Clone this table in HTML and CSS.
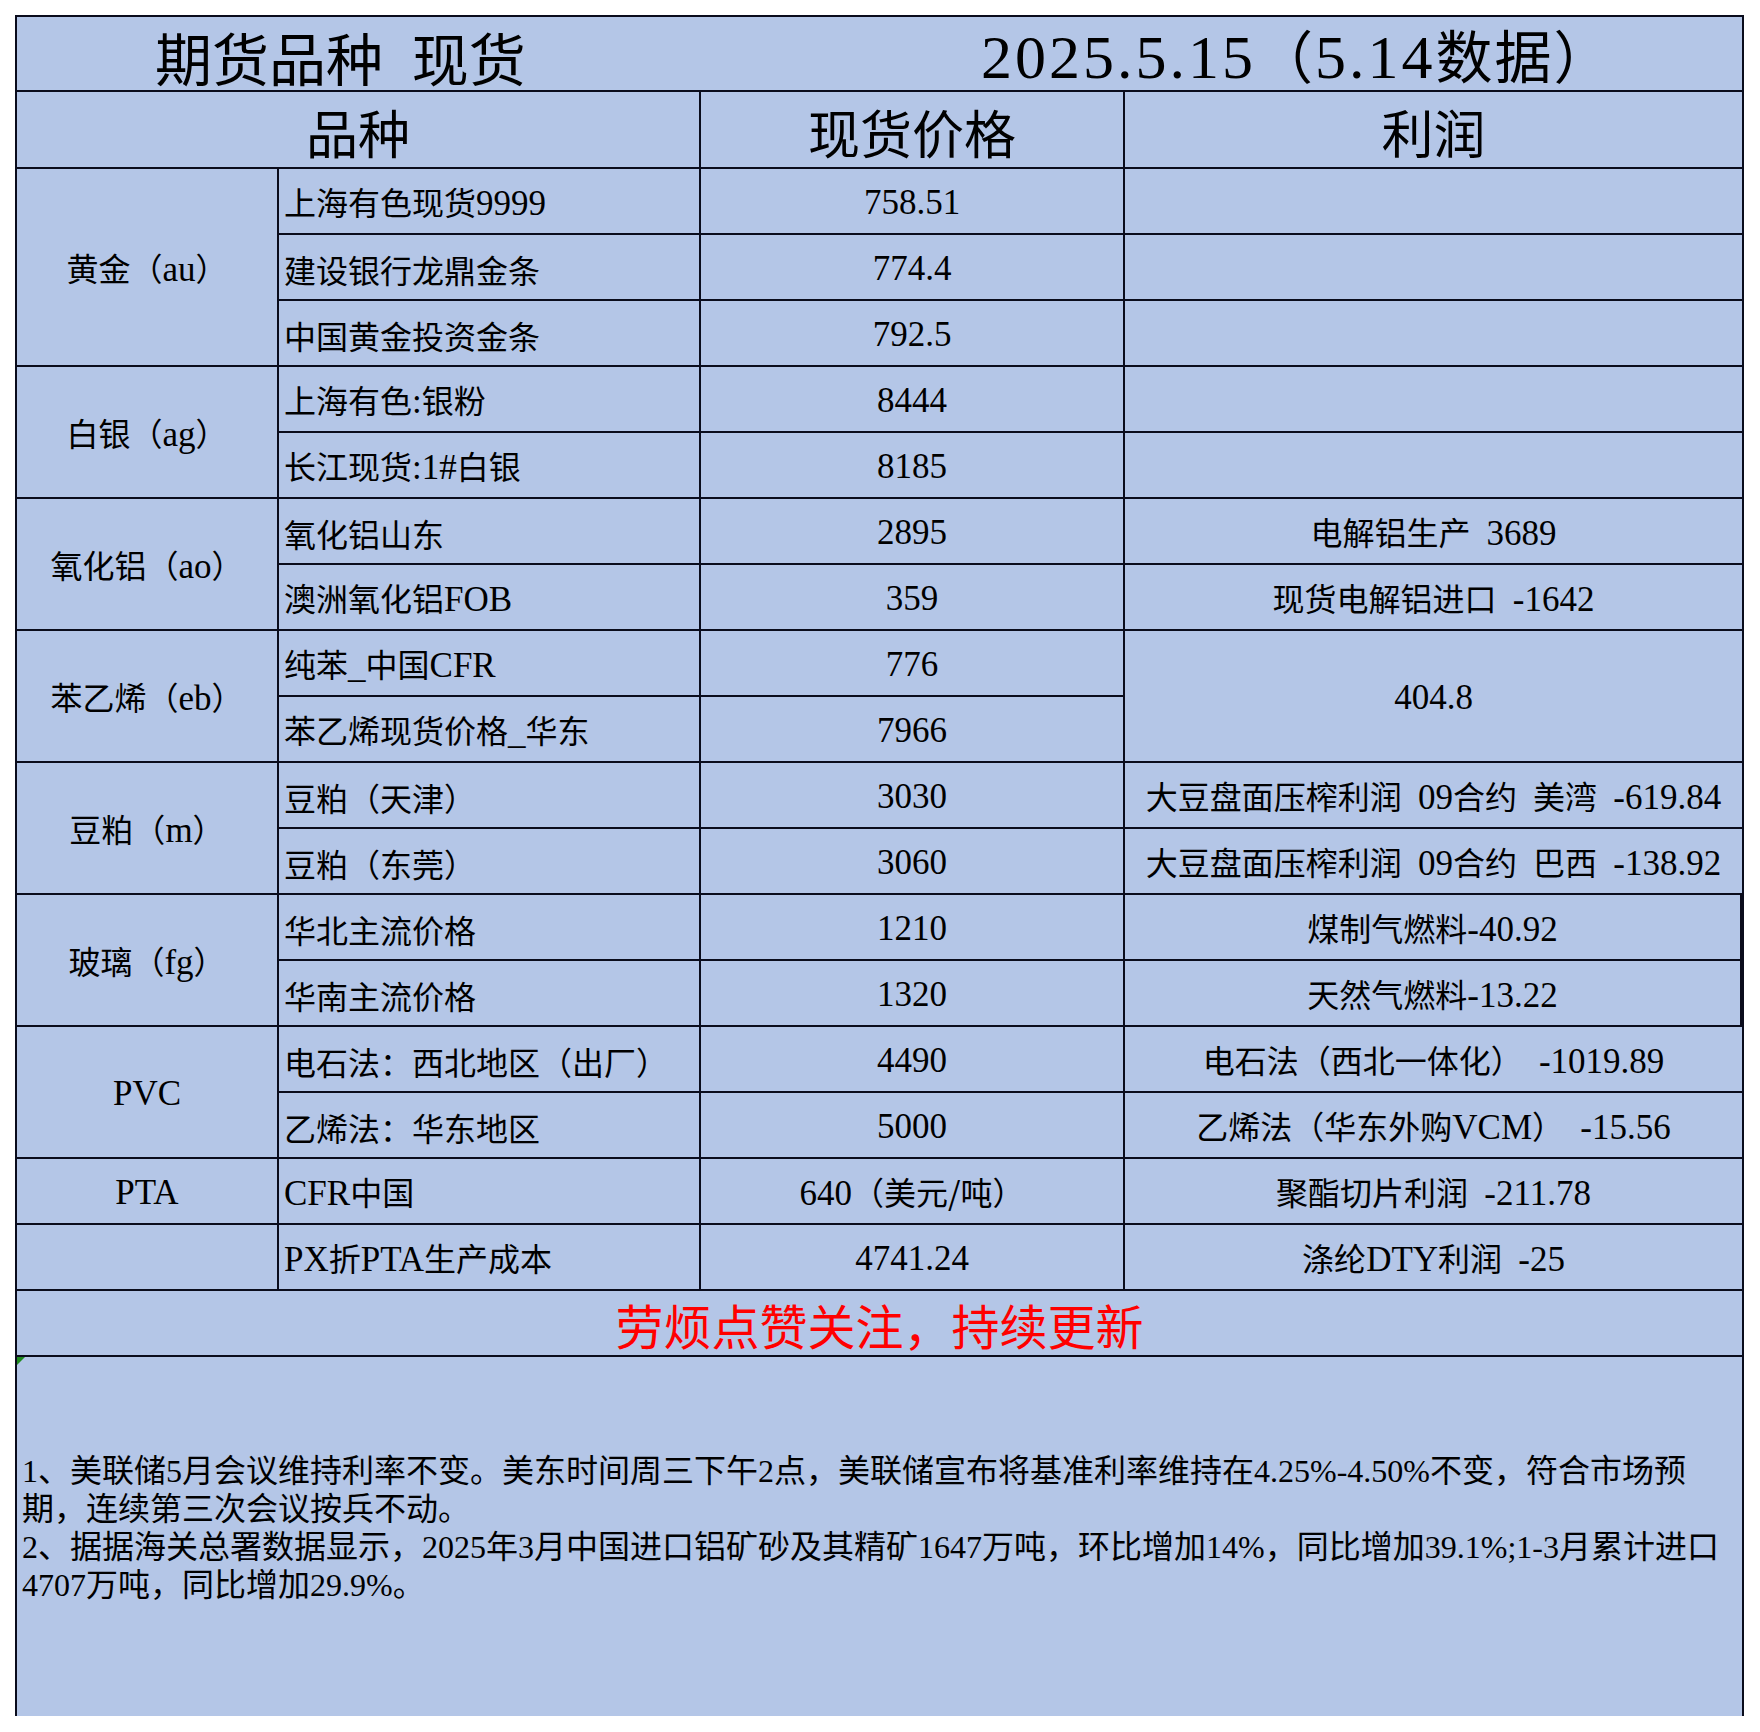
FILE: index.html
```html
<!DOCTYPE html>
<html lang="zh-CN">
<head>
<meta charset="utf-8">
<title>期货品种 现货</title>
<link rel="stylesheet" href="styles.css">
</head>
<body>
<div class="sheet">
  <div class="c title"><span class="title-a">期货品种 现货</span><span class="title-b"><span class="n">2025.5.15</span>（<span class="n">5.14</span>数据）</span></div>

  <div class="c head span2"><span>品种</span></div>
  <div class="c head"><span>现货价格</span></div>
  <div class="c head"><span>利润</span></div>

  <div class="c rs3"><span>黄金（<span class="n">au</span>）</span></div>
  <div class="c l"><span>上海有色现货<span class="n">9999</span></span></div>
  <div class="c"><span class="n">758.51</span></div>
  <div class="c"></div>

  <div class="c l"><span>建设银行龙鼎金条</span></div>
  <div class="c"><span class="n">774.4</span></div>
  <div class="c"></div>

  <div class="c l"><span>中国黄金投资金条</span></div>
  <div class="c"><span class="n">792.5</span></div>
  <div class="c"></div>

  <div class="c rs2"><span>白银（<span class="n">ag</span>）</span></div>
  <div class="c l"><span>上海有色<span class="n">:</span>银粉</span></div>
  <div class="c"><span class="n">8444</span></div>
  <div class="c"></div>

  <div class="c l"><span>长江现货<span class="n">:1#</span>白银</span></div>
  <div class="c"><span class="n">8185</span></div>
  <div class="c"></div>

  <div class="c rs2"><span>氧化铝（<span class="n">ao</span>）</span></div>
  <div class="c l"><span>氧化铝山东</span></div>
  <div class="c"><span class="n">2895</span></div>
  <div class="c"><span>电解铝生产 <span class="n">3689</span></span></div>

  <div class="c l"><span>澳洲氧化铝<span class="n">FOB</span></span></div>
  <div class="c"><span class="n">359</span></div>
  <div class="c"><span>现货电解铝进口 <span class="n">-1642</span></span></div>

  <div class="c rs2"><span>苯乙烯（<span class="n">eb</span>）</span></div>
  <div class="c l"><span>纯苯<span class="n">_</span>中国<span class="n">CFR</span></span></div>
  <div class="c"><span class="n">776</span></div>
  <div class="c rs2"><span class="n">404.8</span></div>

  <div class="c l"><span>苯乙烯现货价格<span class="n">_</span>华东</span></div>
  <div class="c"><span class="n">7966</span></div>

  <div class="c rs2"><span>豆粕（<span class="n">m</span>）</span></div>
  <div class="c l"><span>豆粕（天津）</span></div>
  <div class="c"><span class="n">3030</span></div>
  <div class="c"><span>大豆盘面压榨利润 <span class="n">09</span>合约 美湾 <span class="n">-619.84</span></span></div>

  <div class="c l"><span>豆粕（东莞）</span></div>
  <div class="c"><span class="n">3060</span></div>
  <div class="c"><span>大豆盘面压榨利润 <span class="n">09</span>合约 巴西 <span class="n">-138.92</span></span></div>

  <div class="c rs2"><span>玻璃（<span class="n">fg</span>）</span></div>
  <div class="c l"><span>华北主流价格</span></div>
  <div class="c"><span class="n">1210</span></div>
  <div class="c thick"><span>煤制气燃料<span class="n">-40.92</span></span></div>

  <div class="c l"><span>华南主流价格</span></div>
  <div class="c"><span class="n">1320</span></div>
  <div class="c thick"><span>天然气燃料<span class="n">-13.22</span></span></div>

  <div class="c rs2"><span class="n">PVC</span></div>
  <div class="c l"><span>电石法：西北地区（出厂）</span></div>
  <div class="c"><span class="n">4490</span></div>
  <div class="c"><span>电石法（西北一体化） <span class="n">-1019.89</span></span></div>

  <div class="c l"><span>乙烯法：华东地区</span></div>
  <div class="c"><span class="n">5000</span></div>
  <div class="c"><span>乙烯法（华东外购<span class="n">VCM</span>） <span class="n">-15.56</span></span></div>

  <div class="c"><span class="n">PTA</span></div>
  <div class="c l"><span><span class="n">CFR</span>中国</span></div>
  <div class="c"><span><span class="n">640</span>（美元/吨）</span></div>
  <div class="c"><span>聚酯切片利润 <span class="n">-211.78</span></span></div>

  <div class="c"></div>
  <div class="c l"><span><span class="n">PX</span>折<span class="n">PTA</span>生产成本</span></div>
  <div class="c"><span class="n">4741.24</span></div>
  <div class="c"><span>涤纶<span class="n">DTY</span>利润 <span class="n">-25</span></span></div>

  <div class="c red span4"><span>劳烦点赞关注，持续更新</span></div>

  <div class="c notes span4"><span class="flag"></span><span class="n">1</span>、美联储<span class="n">5</span>月会议维持利率不变。美东时间周三下午<span class="n">2</span>点，美联储宣布将基准利率维持在<span class="n">4.25%-4.50%</span>不变，符合市场预<br>期，连续第三次会议按兵不动。<br><span class="n">2</span>、据据海关总署数据显示，<span class="n">2025</span>年<span class="n">3</span>月中国进口铝矿砂及其精矿<span class="n">1647</span>万吨，环比增加<span class="n">14%</span>，同比增加<span class="n">39.1%;1-3</span>月累计进口<br><span class="n">4707</span>万吨，同比增加<span class="n">29.9%</span>。</div>
</div>
</body>
</html>
```

FILE: styles.css
```css
* {
  box-sizing: border-box;
  margin: 0;
  padding: 0;
}

html, body {
  background: #ffffff;
}

body {
  padding: 15px 0 0 15px;
  font-family: "Noto Sans CJK SC", sans-serif;
  color: #000000;
  text-spacing-trim: space-all;
}

.sheet {
  display: grid;
  width: 1729px;
  grid-template-columns: 262px 422px 424px 619px;
  grid-template-rows: 75px 77px repeat(18, 66px) 359px;
  border-left: 2px solid #0a0c1c;
  border-top: 2px solid #0a0c1c;
  background: #b4c6e7;
}

.c {
  border-right: 2px solid #0a0c1c;
  border-bottom: 2px solid #0a0c1c;
  display: flex;
  align-items: center;
  justify-content: center;
  font-size: 32px;
  line-height: 1;
  white-space: nowrap;
  word-spacing: 9px;
  padding-top: 3px;
}

.n {
  font-family: "Liberation Serif", serif;
  font-size: 35px;
  word-spacing: 0;
}

.l {
  justify-content: flex-start;
  padding-left: 5px;
}

.span2 { grid-column: span 2; }
.span4 { grid-column: span 4; }
.rs2 { grid-row: span 2; }
.rs3 { grid-row: span 3; }

.thick {
  border-right-width: 4px;
}

.title {
  grid-column: span 4;
  justify-content: flex-start;
  padding: 5px 0 0 138px;
  font-size: 57px;
  word-spacing: 16px;
}

.title-a {
  width: 826px;
}

.title-b {
  letter-spacing: 2px;
}

.title .n {
  font-size: 62px;
  letter-spacing: 3px;
}

.head {
  font-size: 52px;
  padding-top: 5px;
}

.red {
  color: #ff0000;
  font-size: 48px;
  padding-top: 1px;
}

.notes {
  display: block;
  position: relative;
  border-bottom: none;
  padding: 92px 0 0 5px;
  line-height: 38px;
  word-spacing: 0;
}

.notes .n {
  font-size: 32px;
  line-height: 28px;
}

.flag {
  position: absolute;
  left: 0;
  top: 0;
  width: 0;
  height: 0;
  border-top: 8px solid #1e8a1e;
  border-right: 8px solid transparent;
}
```
